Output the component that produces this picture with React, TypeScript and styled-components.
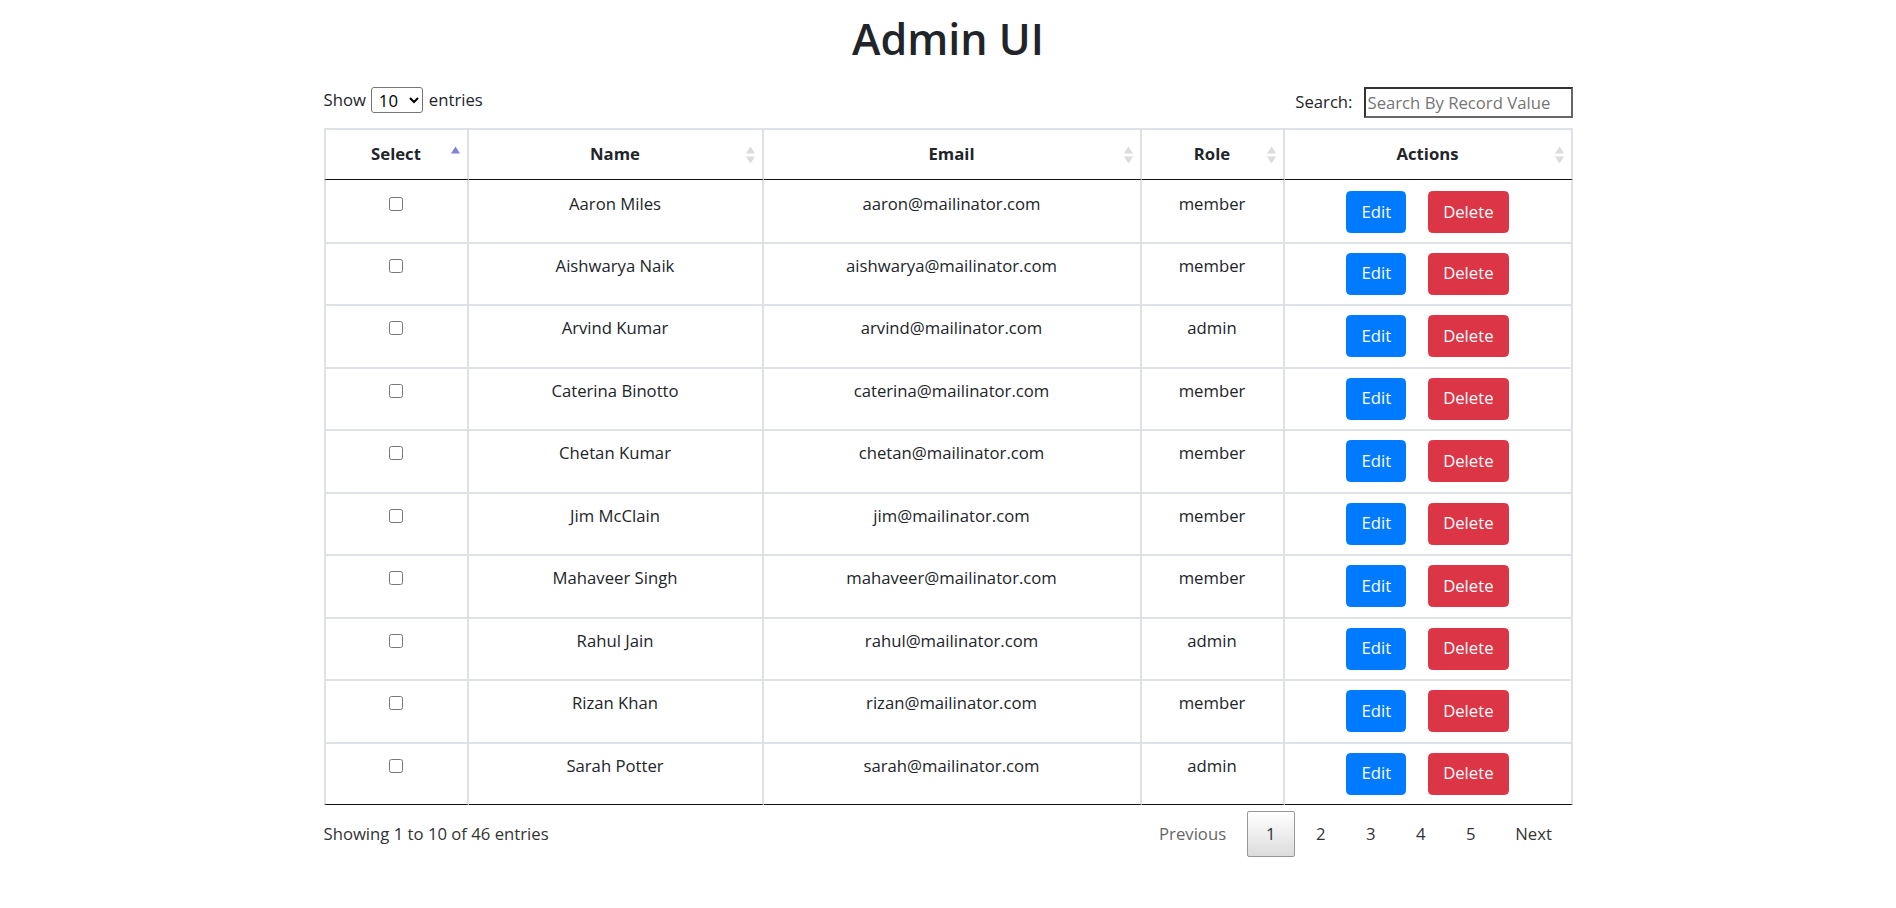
import React from "react";
import styled, { createGlobalStyle } from "styled-components";

const GlobalStyle = createGlobalStyle`
  html, body { margin: 0; padding: 0; background: #fff; }
  body {
    font-family: "Open Sans", "Noto Sans", Arial, sans-serif;
    font-size: 16.7px;
    line-height: 26.4px;
    color: #212529;
  }
  * { box-sizing: border-box; }
`;

const Page = styled.div`
  width: 1249px;
  margin: 0 auto;
`;

const Title = styled.h1`
  margin: 13px 0 0;
  font-size: 43px;
  line-height: 52px;
  font-weight: 600;
  text-align: center;
  color: #212529;
`;

const Controls = styled.div`
  margin-top: 22px;
  display: flex;
  justify-content: space-between;
  align-items: flex-start;
`;

const LengthGroup = styled.label`
  display: flex;
  align-items: center;
  height: 26px;
`;

const LengthSelect = styled.select`
  width: 52px;
  height: 26px;
  margin: 0 6px 0 5px;
  padding: 0 0 0 3px;
  border: 1px solid #767676;
  border-radius: 3px;
  background: #fff;
  font-family: inherit;
  font-size: 16.7px;
  color: #000;
`;

const SearchGroup = styled.label`
  display: flex;
  align-items: center;
  height: 31px;
`;

const SearchInput = styled.input`
  width: 209px;
  height: 31px;
  margin-left: 11px;
  padding: 1px 2px;
  border: 2px solid;
  border-color: #333 #666 #666 #333;
  font-family: inherit;
  font-size: 16.7px;
  color: #212529;
  &::placeholder { color: #757575; }
`;

const Table = styled.table`
  width: 1249px;
  margin-top: 10px;
  border-collapse: separate;
  border-spacing: 0;
  table-layout: fixed;
`;

const Th = styled.th`
  position: relative;
  padding: 11px 13px 11.6px;
  font-weight: 700;
  text-align: center;
  line-height: 26.4px;
  border-top: 2px solid #dee2e6;
  border-right: 2px solid #dee2e6;
  border-bottom: 1px solid #111;
  &:first-child { border-left: 2px solid #dee2e6; }
`;

const SortIcon = styled.svg`
  position: absolute;
  right: 6px;
  top: 50%;
  transform: translateY(-50%);
`;

const Row = styled.tr``;

const Td = styled.td<{ $first?: boolean; $last?: boolean }>`
  padding: ${(p) => (p.$first ? "11px" : "9px")} 13px ${(p) => (p.$first ? "8.5px" : "9.5px")};
  text-align: center;
  vertical-align: top;
  line-height: 26.4px;
  border-right: 2px solid #dee2e6;
  border-bottom: ${(p) => (p.$last ? "1px solid #111" : "2px solid #dee2e6")};
  &:first-child { border-left: 2px solid #dee2e6; }
`;

const Check = styled.input`
  width: 14px;
  height: 14px;
  margin: 6px 0 0;
  vertical-align: top;
`;

const Actions = styled.div`
  display: flex;
  justify-content: center;
  gap: 22px;
`;

const Btn = styled.button<{ $variant: "edit" | "delete" }>`
  height: 42px;
  padding: 6.6px 14px;
  border: 1px solid ${(p) => (p.$variant === "edit" ? "#007bff" : "#dc3545")};
  background: ${(p) => (p.$variant === "edit" ? "#007bff" : "#dc3545")};
  color: #fff;
  border-radius: 4.4px;
  font-family: inherit;
  font-size: 16.7px;
  line-height: 26.4px;
  cursor: pointer;
`;

const Footer = styled.div`
  margin-top: 6px;
  display: flex;
  justify-content: space-between;
  align-items: center;
  height: 46px;
`;

const Info = styled.div`
  color: #333;
`;

const Pager = styled.div`
  display: flex;
  align-items: center;
  margin-right: 2px;
`;

const PageBtn = styled.span<{ $current?: boolean; $disabled?: boolean }>`
  display: inline-block;
  min-width: 48px;
  height: 46px;
  margin-left: 2px;
  padding: 8.8px 17.6px;
  text-align: center;
  line-height: 26.4px;
  border: 1px solid ${(p) => (p.$current ? "#979797" : "transparent")};
  border-radius: 2px;
  color: ${(p) => (p.$disabled ? "#666" : "#333")};
  background: ${(p) =>
    p.$current ? "linear-gradient(to bottom, #fff 0%, #dcdcdc 100%)" : "transparent"};
  cursor: ${(p) => (p.$disabled ? "default" : "pointer")};
`;

const users = [
  ["Aaron Miles", "aaron@mailinator.com", "member"],
  ["Aishwarya Naik", "aishwarya@mailinator.com", "member"],
  ["Arvind Kumar", "arvind@mailinator.com", "admin"],
  ["Caterina Binotto", "caterina@mailinator.com", "member"],
  ["Chetan Kumar", "chetan@mailinator.com", "member"],
  ["Jim McClain", "jim@mailinator.com", "member"],
  ["Mahaveer Singh", "mahaveer@mailinator.com", "member"],
  ["Rahul Jain", "rahul@mailinator.com", "admin"],
  ["Rizan Khan", "rizan@mailinator.com", "member"],
  ["Sarah Potter", "sarah@mailinator.com", "admin"],
];

const columns: { label: string; width: number; asc?: boolean }[] = [
  { label: "Select", width: 145, asc: true },
  { label: "Name", width: 295 },
  { label: "Email", width: 378 },
  { label: "Role", width: 143 },
  { label: "Actions", width: 288 },
];

function Sort({ asc }: { asc?: boolean }) {
  return (
    <SortIcon width="11" height="17" viewBox="0 0 11 17">
      {asc ? (
        <polygon points="1,7 5.5,0 10,7" fill="#8181dc" />
      ) : (
        <>
          <polygon points="1,7 5.5,0 10,7" fill="#dcdcdc" />
          <polygon points="1,10 5.5,17 10,10" fill="#dcdcdc" />
        </>
      )}
    </SortIcon>
  );
}

export default function App() {
  return (
    <>
      <GlobalStyle />
      <Page>
        <Title>Admin UI</Title>
        <Controls>
          <LengthGroup>
            Show
            <LengthSelect defaultValue="10">
              <option value="10">10</option>
              <option value="25">25</option>
              <option value="50">50</option>
              <option value="100">100</option>
            </LengthSelect>
            entries
          </LengthGroup>
          <SearchGroup>
            Search:
            <SearchInput placeholder="Search By Record Value" />
          </SearchGroup>
        </Controls>
        <Table>
          <colgroup>
            {columns.map((c) => (
              <col key={c.label} style={{ width: c.width }} />
            ))}
          </colgroup>
          <thead>
            <tr>
              {columns.map((c) => (
                <Th key={c.label}>
                  {c.label}
                  <Sort asc={c.asc} />
                </Th>
              ))}
            </tr>
          </thead>
          <tbody>
            {users.map(([name, email, role], i) => {
              const first = i === 0;
              const last = i === users.length - 1;
              return (
                <Row key={email}>
                  <Td $first={first} $last={last}>
                    <Check type="checkbox" />
                  </Td>
                  <Td $first={first} $last={last}>{name}</Td>
                  <Td $first={first} $last={last}>{email}</Td>
                  <Td $first={first} $last={last}>{role}</Td>
                  <Td $first={first} $last={last}>
                    <Actions>
                      <Btn $variant="edit">Edit</Btn>
                      <Btn $variant="delete">Delete</Btn>
                    </Actions>
                  </Td>
                </Row>
              );
            })}
          </tbody>
        </Table>
        <Footer>
          <Info>Showing 1 to 10 of 46 entries</Info>
          <Pager>
            <PageBtn $disabled>Previous</PageBtn>
            <PageBtn $current>1</PageBtn>
            <PageBtn>2</PageBtn>
            <PageBtn>3</PageBtn>
            <PageBtn>4</PageBtn>
            <PageBtn>5</PageBtn>
            <PageBtn>Next</PageBtn>
          </Pager>
        </Footer>
      </Page>
    </>
  );
}
